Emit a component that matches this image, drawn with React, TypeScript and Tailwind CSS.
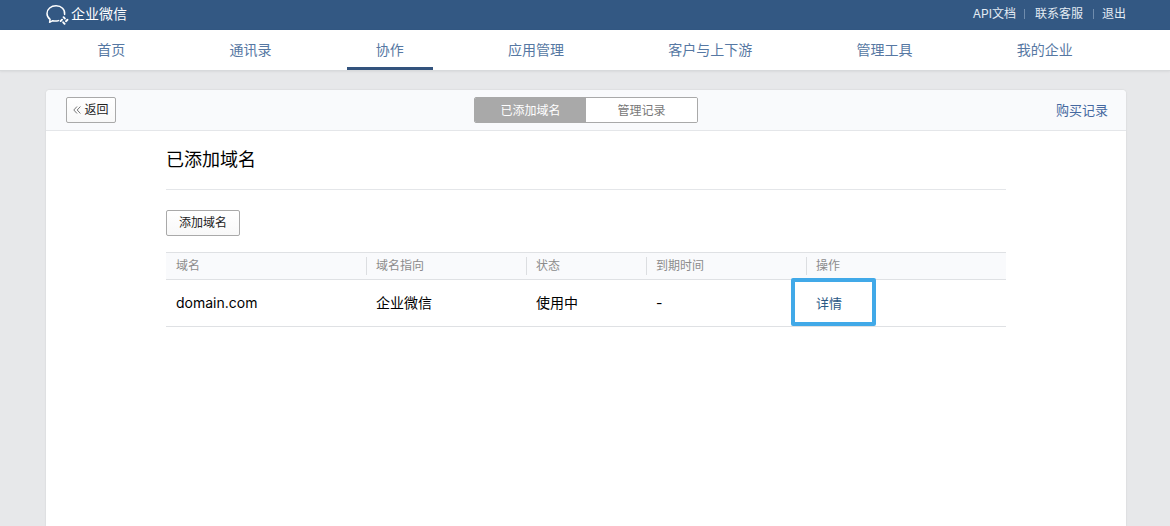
import React from 'react';

interface DomainItem {
  name: string;
  target: string;
  status: string;
  expiresAt: string;
}

const navItems = ['首页', '通讯录', '协作', '应用管理', '客户与上下游', '管理工具', '我的企业'];
const activeNav = '协作';

const columns = [
  { title: '域名', width: 'w-[200px]' },
  { title: '域名指向', width: 'w-[160px]' },
  { title: '状态', width: 'w-[120px]' },
  { title: '到期时间', width: 'w-[160px]' },
  { title: '操作', width: 'w-[200px]' },
];

const domains: DomainItem[] = [
  { name: 'domain.com', target: '企业微信', status: '使用中', expiresAt: '-' },
];

const LogoIcon: React.FC = () => (
  <svg width="24" height="22" viewBox="0 0 24 22" fill="none" stroke="currentColor" strokeLinecap="round" aria-hidden="true">
    <path
      d="M18.6 11.4C19.2 6.4 15.4 2.8 10.1 2.8C4.9 2.8 1 6.1 1 10.4C1 12.9 2.2 14.9 4.1 16.3L3.6 19.3L6.7 17.7C8.7 18.3 10.8 18.2 12.6 17.6"
      strokeWidth="1.5"
      strokeLinejoin="round"
    />
    <path
      d="M17.6 14.2L18.9 15.6M21.5 16.8L20 18.2M18.6 20.8L17.2 19.3M14.6 18.1L16 16.7"
      strokeWidth="1.9"
    />
  </svg>
);

// Centred column shared by the top bar, the navigation and the card
const Container: React.FC<{ className?: string; children: React.ReactNode }> = ({ className = '', children }) => (
  <div className={`w-full ${className}`}>
    <div className="mx-auto flex h-full w-full max-w-[1080px] flex-1 flex-col">{children}</div>
  </div>
);

const TopBar: React.FC = () => (
  <header className="bg-[#335883] text-white">
    <Container className="pl-0.5">
      <div className="flex h-[30px] items-center justify-between pb-0.5">
        <a href="#home" className="flex items-center gap-px text-sm">
          <LogoIcon />
          企业微信
        </a>
        <div className="flex items-center text-xs text-[#e3ebf3]">
          <a href="#api">API文档</a>
          <span className="mr-2.5 ml-2 h-2.5 w-px bg-[#6f8cad]" />
          <a href="#support">联系客服</a>
          <span className="mr-2 ml-2.5 h-2.5 w-px bg-[#6f8cad]" />
          <a href="#logout">退出</a>
        </div>
      </div>
    </Container>
  </header>
);

const MainNav: React.FC = () => (
  <nav className="border-b border-[#d8dadc] bg-white shadow-[0_1px_2px_rgba(0,0,0,0.06)]">
    <Container>
      <ul className="flex h-10 justify-around">
        {navItems.map((item) => (
          <li key={item} className="flex">
            <a
              href="#nav"
              className={`border-b-[3px] px-[29px] text-sm leading-10 text-[#5678a3] ${
                item === activeNav ? 'border-[#33537d]' : 'border-transparent'
              }`}
            >
              {item}
            </a>
          </li>
        ))}
      </ul>
    </Container>
  </nav>
);

const CardHeader: React.FC = () => (
  <div className="grid h-[41px] grid-cols-3 items-center rounded-t border-b border-[#e4e6e9] bg-[#f9fafc] px-5">
    <button className="flex h-[26px] w-[50px] items-center justify-center gap-[3px] rounded-xs border border-[#a9a9a9] bg-linear-to-b from-white to-[#f8f8f8] text-xs text-[#222]">
      <svg width="8" height="8" viewBox="0 0 8 8" fill="none" stroke="#777" aria-hidden="true">
        <path d="M4 0.5L0.8 4L4 7.5M7.4 0.5L4.2 4L7.4 7.5" />
      </svg>
      返回
    </button>
    <div className="flex h-[26px] w-56 justify-self-center overflow-hidden rounded-xs border border-[#a9a9a9] text-xs">
      <button className="flex-1 bg-[#a9a9a9] pt-0.5 text-white">已添加域名</button>
      <button className="flex-1 bg-white pt-0.5 text-[#787878]">管理记录</button>
    </div>
    <a href="#orders" className="-mr-0.5 justify-self-end pt-0.5 text-[13px] text-[#4568a0]">购买记录</a>
  </div>
);

const DomainTable: React.FC = () => (
  <table className="mt-4 w-full table-fixed border-collapse text-left">
    <thead>
      <tr className="h-[27px] border-y border-[#dfe1e4] bg-[#f9fafc]">
        {columns.map((col, i) => (
          <th key={col.title} scope="col" className={`p-0 text-xs font-normal text-[#8c8c8c] ${col.width}`}>
            <div className={`h-[18px] leading-[18px] ${i > 0 ? 'border-l border-[#dcdee1] pl-[9px]' : 'pl-2.5'}`}>
              {col.title}
            </div>
          </th>
        ))}
      </tr>
    </thead>
    <tbody>
      {domains.map((item) => (
        <tr key={item.name} className="h-[47px] border-b border-[#dfe1e4] text-sm text-black">
          <td className="py-0 pl-2.5">{item.name}</td>
          <td className="py-0 pl-2.5">{item.target}</td>
          <td className="py-0 pl-2.5">{item.status}</td>
          <td className="py-0 pl-2.5">{item.expiresAt}</td>
          <td className="relative py-0 pl-2.5">
            <a href="#detail" className="text-[13px] text-[#2a5885]">详情</a>
            {/* highlight around the detail link */}
            <span className="pointer-events-none absolute -top-0.5 -left-[15px] h-12 w-[85px] rounded-xs border-4 border-[#41a9e8]" />
          </td>
        </tr>
      ))}
    </tbody>
  </table>
);

const App: React.FC = () => {
  return (
    <div className="flex min-h-screen flex-col bg-[#e7e8ea] font-[Inter,'Noto_Sans_CJK_SC',sans-serif]">
      <TopBar />
      <MainNav />
      <Container className="flex flex-1 flex-col pt-[19px] pl-0.5">
        <main className="flex-1 rounded-t bg-white shadow-[0_0_2px_rgba(0,0,0,0.12)]">
          <CardHeader />
          <section className="px-[120px]">
            <h1 className="border-b border-[#e4e6e9] py-[15px] text-lg text-black">已添加域名</h1>
            <button className="mt-5 h-[26px] w-[74px] rounded-xs border border-[#a9a9a9] bg-linear-to-b from-white to-[#f8f8f8] text-xs text-[#222]">
              添加域名
            </button>
            <DomainTable />
          </section>
        </main>
      </Container>
    </div>
  );
};

export default App;
